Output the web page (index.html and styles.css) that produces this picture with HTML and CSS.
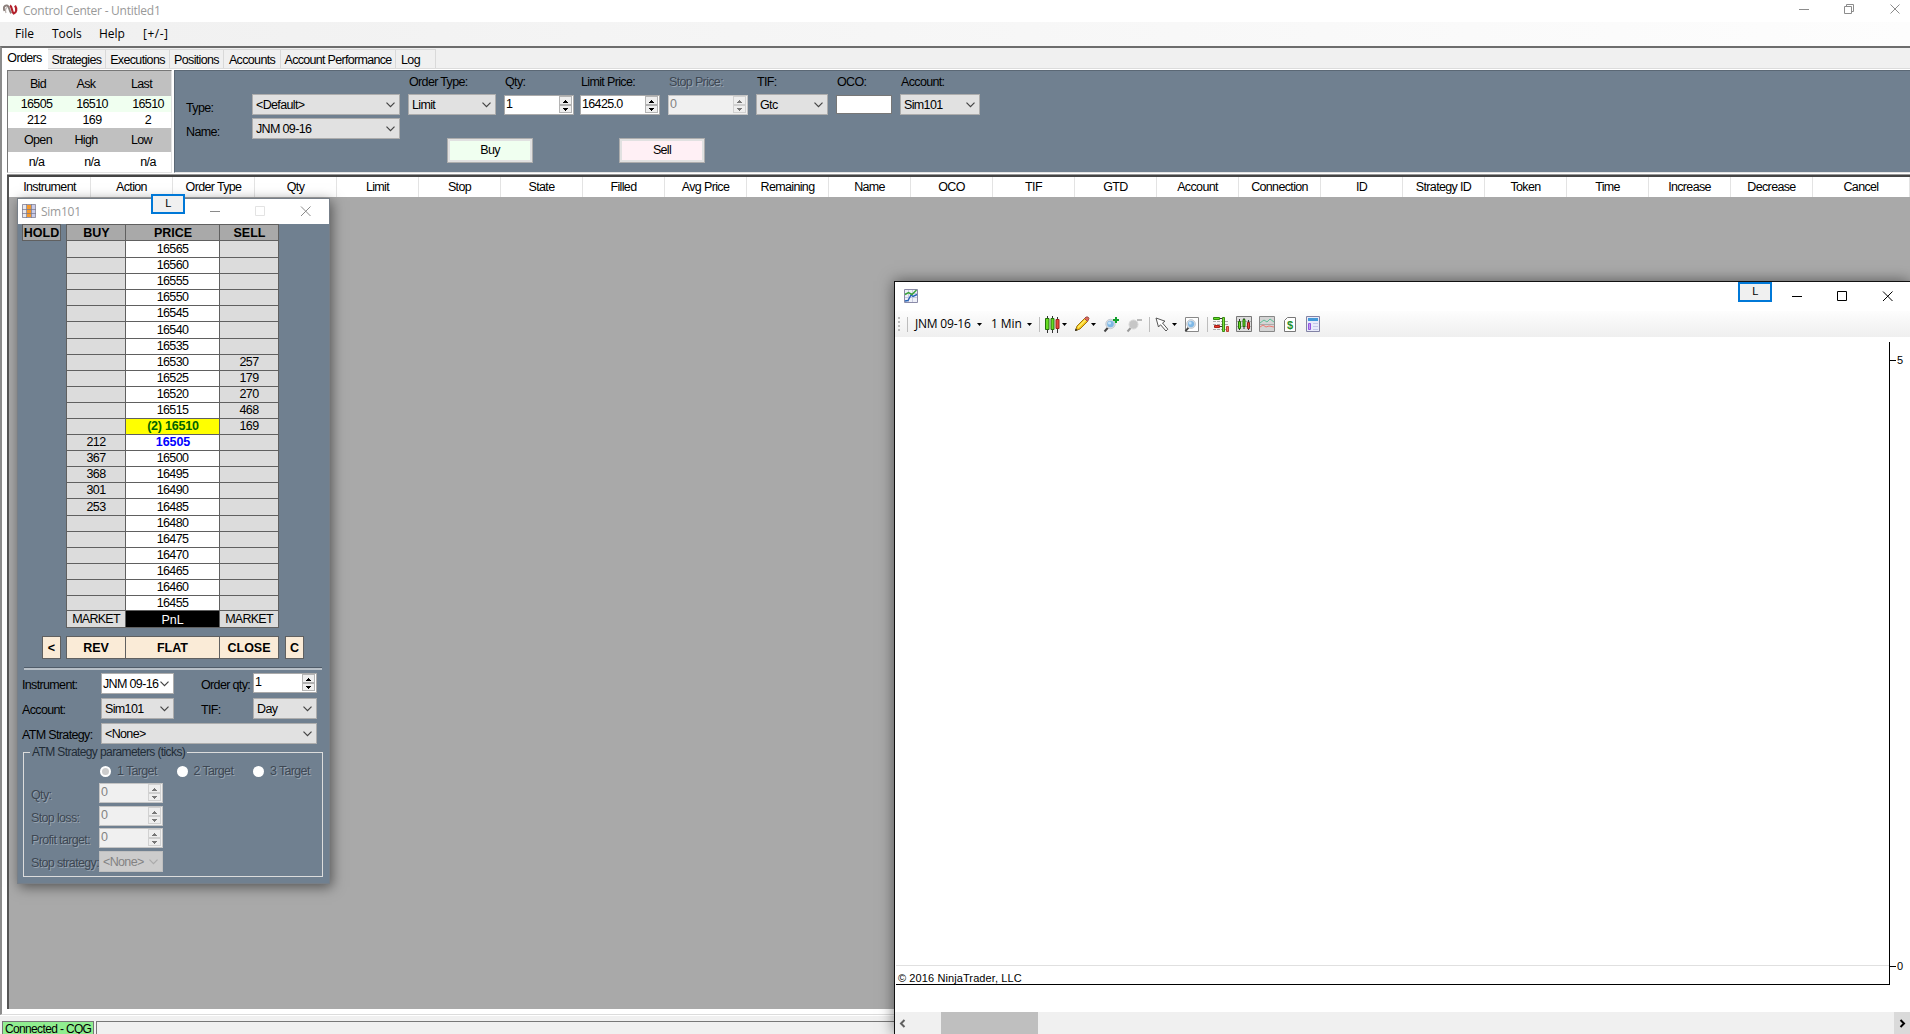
FILE: index.html
```html
<!DOCTYPE html>
<html lang="en">
<head>
<meta charset="utf-8">
<title>Control Center - Untitled1</title>
<link rel="stylesheet" href="styles.css">
</head>
<body>
<svg class="defs" width="0" height="0">
  <symbol id="chev" viewBox="0 0 9 6"><path d="M.5 .7 4.5 4.7 8.500 .7" fill="none" stroke="currentColor" stroke-width="1.2"/></symbol>
  <symbol id="drop" viewBox="0 0 5 3"><path d="M0 0h5L2.500 3z" fill="#000"/></symbol>
  <symbol id="lens" viewBox="0 0 17 17"><path d="M1.500 15.500 6 10.500" stroke="#444" stroke-width="2"/><circle cx="7.500" cy="8" r="4.700" fill="#d5dce2" stroke="#c4cbd2"/><circle cx="7.500" cy="8" r="3.300" fill="#7fb8e6"/><circle cx="6.500" cy="7" r="1.600" fill="#c3e2f8"/></symbol>
</svg>

<main class="control-center">
  <header class="titlebar">
    <svg class="logo" width="15" height="14" viewBox="0 0 15 14"><path d="M1.500 8C0 4.500 1.500 2 4 2.500 6.800 3.200 5.800 8 8.300 10.300" fill="none" stroke="#8b7f7b" stroke-width="1.900"/><path d="M3 10C1.800 7 3 4.200 4.500 4.800" fill="none" stroke="#b9b1ae" stroke-width="1.200"/><path d="M7 2.500C9.500 4 8.500 9 10.800 10.500 13.300 10 14.300 6 12 2.700" fill="none" stroke="#b3202b" stroke-width="2.200"/></svg>
    <span class="caption">Control Center - Untitled1</span>
    <svg class="sysbtns" width="102" height="14" viewBox="0 0 102 14" fill="none" stroke="#8c8c8c"><path d="M1 7.500h10M46.500 4.500h7v7h-7zM48.500 4v-1.500h7v7h-1.500M92.500 2.500l9 9M101.500 2.500l-9 9"/></svg>
  </header>
  <nav class="menu"><span>File</span><span>Tools</span><span>Help</span><span>[+/-]</span></nav>

  <div class="frame">
    <div class="tabs">
      <span class="tab active w-orders">Orders</span><span class="tab w-strat">Strategies</span><span class="tab w-exec">Executions</span><span class="tab w-pos">Positions</span><span class="tab w-acc">Accounts</span><span class="tab w-perf">Account Performance</span><span class="tab w-log">Log</span>
    </div>
    <div class="page">
      <div class="top-panels">
        <section class="quotes">
          <div class="q head tall"><span>Bid</span><span>Ask</span><span>Last</span></div>
          <div class="q mint"><span>16505</span><span>16510</span><span>16510</span></div>
          <div class="q size"><span>212</span><span>169</span><span>2</span></div>
          <div class="q head mid"><span>Open</span><span>High</span><span>Low</span></div>
          <div class="q low"><span>n/a</span><span>n/a</span><span>n/a</span></div>
        </section>
        <section class="entry">
          <div class="presets">
            <span>Type:</span><div class="combo">&lt;Default&gt;<svg><use href="#chev"/></svg></div>
            <span>Name:</span><div class="combo">JNM 09-16<svg><use href="#chev"/></svg></div>
          </div>
          <div class="order">
            <div class="labels"><span>Order Type:</span><span>Qty:</span><span>Limit Price:</span><span class="off">Stop Price:</span><span>TIF:</span><span>OCO:</span><span>Account:</span></div>
            <div class="inputs">
              <div class="combo">Limit<svg><use href="#chev"/></svg></div>
              <div class="spin">1<i></i></div>
              <div class="spin">16425.0<i></i></div>
              <div class="spin dis">0<i></i></div>
              <div class="combo">Gtc<svg><use href="#chev"/></svg></div>
              <div class="box"></div>
              <div class="combo">Sim101<svg><use href="#chev"/></svg></div>
            </div>
            <div class="actions"><span class="btn buy">Buy</span><span class="btn sell">Sell</span></div>
          </div>
        </section>
      </div>
      <section class="orders">
        <div class="cols"><span>Instrument</span><span>Action</span><span>Order Type</span><span>Qty</span><span>Limit</span><span>Stop</span><span>State</span><span>Filled</span><span>Avg Price</span><span>Remaining</span><span>Name</span><span>OCO</span><span>TIF</span><span>GTD</span><span>Account</span><span>Connection</span><span>ID</span><span>Strategy ID</span><span>Token</span><span>Time</span><span>Increase</span><span>Decrease</span><span>Cancel</span></div>
      </section>
    </div>
  </div>
  <footer class="status"><span class="conn">Connected - CQG</span><span class="rest"></span></footer>
</main>

<section class="dom">
  <span class="link dom-link">L</span>
  <header class="dom-title">
    <svg width="14" height="14" viewBox="0 0 14 14"><path fill="#e8e8ee" d="M0 0h14v14H0z"/><path fill="#c9cbe8" d="M9 1h4v12H9z"/><path fill="#f79a2c" d="M5 1h4v12H5z"/><path d="M.5 .5h13v13H.5zM4.500 0v14M9.500 0v14M0 5.500h14M0 9.500h14" stroke="#77768a" fill="none" stroke-opacity=".7"/></svg>
    <span class="caption">Sim101</span>
    <svg class="dom-sys" width="104" height="14" viewBox="0 0 104 14" fill="none"><path d="M0 7.500h10M91 2.500l9.500 9.500M100.500 2.500 91 12" stroke="#8a8a8a"/><path d="M45.500 2.500h9v9h-9z" stroke="#e3e3e3"/></svg>
  </header>
  <div class="ladder">
    <span class="hold">HOLD</span>
    <div class="rows">
      <div class="r h"><span>BUY</span><span>PRICE</span><span>SELL</span></div>
      <div class="r x"><span></span><span>16565</span><span></span></div>
      <div class="r"><span></span><span>16560</span><span></span></div>
      <div class="r"><span></span><span>16555</span><span></span></div>
      <div class="r"><span></span><span>16550</span><span></span></div>
      <div class="r"><span></span><span>16545</span><span></span></div>
      <div class="r x"><span></span><span>16540</span><span></span></div>
      <div class="r"><span></span><span>16535</span><span></span></div>
      <div class="r"><span></span><span>16530</span><span>257</span></div>
      <div class="r"><span></span><span>16525</span><span>179</span></div>
      <div class="r"><span></span><span>16520</span><span>270</span></div>
      <div class="r"><span></span><span>16515</span><span>468</span></div>
      <div class="r last"><span></span><span>(2) 16510</span><span>169</span></div>
      <div class="r bid"><span>212</span><span>16505</span><span></span></div>
      <div class="r"><span>367</span><span>16500</span><span></span></div>
      <div class="r"><span>368</span><span>16495</span><span></span></div>
      <div class="r"><span>301</span><span>16490</span><span></span></div>
      <div class="r x"><span>253</span><span>16485</span><span></span></div>
      <div class="r"><span></span><span>16480</span><span></span></div>
      <div class="r"><span></span><span>16475</span><span></span></div>
      <div class="r"><span></span><span>16470</span><span></span></div>
      <div class="r"><span></span><span>16465</span><span></span></div>
      <div class="r"><span></span><span>16460</span><span></span></div>
      <div class="r short"><span></span><span>16455</span><span></span></div>
      <div class="r pnl"><span>MARKET</span><span>PnL</span><span>MARKET</span></div>
    </div>
  </div>
  <div class="exits"><b class="solo">&lt;</b><div class="trio"><b>REV</b><b>FLAT</b><b>CLOSE</b></div><b class="solo">C</b></div>
  <hr>
  <div class="form">
    <span>Instrument:</span><div class="combo white">JNM 09-16<svg><use href="#chev"/></svg></div><span class="c3">Order qty:</span><div class="spin">1<i></i></div>
    <span>Account:</span><div class="combo">Sim101<svg><use href="#chev"/></svg></div><span class="c3">TIF:</span><div class="combo">Day<svg><use href="#chev"/></svg></div>
    <span class="atm">ATM Strategy:</span><div class="combo wide">&lt;None&gt;<svg><use href="#chev"/></svg></div>
  </div>
  <fieldset>
    <legend>ATM Strategy parameters (ticks)</legend>
    <div class="radios off"><span><i class="on"></i>1 Target</span><span><i></i>2 Target</span><span><i></i>3 Target</span></div>
    <div class="params">
      <span class="off">Qty:</span><div class="spin dis">0<i></i></div>
      <span class="off">Stop loss:</span><div class="spin dis">0<i></i></div>
      <span class="off">Profit target:</span><div class="spin dis">0<i></i></div>
      <span class="off">Stop strategy:</span><div class="combo dis">&lt;None&gt;<svg><use href="#chev"/></svg></div>
    </div>
  </fieldset>
</section>

<section class="chart">
  <span class="link chart-link">L</span>
  <header class="chart-title">
    <svg width="14" height="14" viewBox="0 0 14 14"><path d="M.5 .5h13v13H.5z" fill="#eef0f8" stroke="#8b8ba8"/><path d="M4.500 1v12M8.500 1v12M1 4.500h12M1 8.500h12" stroke="#c9cbe0"/><path d="M1 12 4 11.500 7 6 9 7.500 13 5.500" fill="none" stroke="#2763b5" stroke-width="1.400"/><path d="M1 5.500 4.500 3.500 8 5.500 12.500 1" fill="none" stroke="#3aa33a" stroke-width="1.500"/></svg>
    <svg class="chart-sys" width="102" height="14" viewBox="0 0 102 14" fill="none" stroke="#000"><path d="M0 7.500h10M45.500 2.500h9v9h-9zM91 2.500l9.500 9.500M100.500 2.500 91 12"/></svg>
  </header>
  <div class="toolbar">
    <svg class="grip" width="2" height="15"><path d="M0 0h2v2H0zM0 4h2v2H0zM0 8h2v2H0zM0 12h2v2H0z" fill="#bdbdbd"/></svg><u class="s1"></u>
    <span class="t-sym">JNM 09-16</span><svg class="dd"><use href="#drop"/></svg>
    <span class="t-min">1 Min</span><svg class="dd"><use href="#drop"/></svg><u class="s2"></u>
    <svg class="i-bars" width="15" height="17" viewBox="0 0 15 17"><path d="M2.500 0v17M7.500 0v17M12.500 1v16" stroke="#333"/><path d="M.5 2.500h3.500v11H.5zM6 2.500h3v11H6z" fill="#66dd22" stroke="#25700b"/><path d="M11 3.500h3v9h-3z" fill="#e8483d" stroke="#97201a"/></svg><svg class="dd d-a"><use href="#drop"/></svg>
    <svg class="i-pen" width="16" height="16" viewBox="0 0 16 16"><path d="M1.500 14.500 3 10 10.500 2.500l3 3L6 13z" fill="#f7c61d" stroke="#9a7412"/><path d="M4 11.500 11.500 4" stroke="#fff06a" stroke-width="1.500"/><path d="M10.500 2.500 12 1h2l1 1.500-1.500 3z" fill="#e2695c" stroke="#9d5047"/><path d="m1 15 .7-2.500 2 1.800z" fill="#222"/></svg><svg class="dd d-b"><use href="#drop"/></svg>
    <svg class="i-zin" width="17" height="17" viewBox="0 0 17 17"><use href="#lens"/><path d="M13 1v6M10 4h6" stroke="#12a02c" stroke-width="2"/></svg>
    <svg class="i-zout" width="17" height="17" viewBox="0 0 17 17"><path d="M1.500 15.500 6 10.500" stroke="#999" stroke-width="2"/><circle cx="7.500" cy="8.500" r="4.500" fill="#c6c6c6" stroke="#d8d8d8"/><path d="M11 4h5" stroke="#aaa" stroke-width="1.600"/></svg><u class="s3"></u>
    <svg class="i-cur" width="14" height="15" viewBox="0 0 14 15"><path d="M1 1l2.500 9 2-2.300 5.500 6.300 1.800-1.800L7.500 6 10 4.200z" fill="#fff" stroke="#555"/></svg><svg class="dd d-c"><use href="#drop"/></svg>
    <svg class="i-box" width="15" height="17" viewBox="0 0 15 17"><path d="M1.500 1.500h13v14h-13z" fill="#fff" stroke="#888"/><use href="#lens" width="16" height="17"/></svg><u class="s4"></u>
    <svg class="i-dom" width="16" height="16" viewBox="0 0 16 16"><path d="M0 5.500h16M0 8.500h16M0 13.500h16" stroke="#aaa" stroke-dasharray="3 1"/><path d="M.5 1.500h6v2H.5z" fill="#66dd22" stroke="#2f8a10"/><path d="M1.500 9.500h5v2h-5z" fill="#e8392e" stroke="#a82018"/><path d="M7 2.500h2M7 10.500h2" stroke="#333"/><path d="M9.500 1.500h2v14h-2z" fill="#7be03a" stroke="#3b8b14"/><path d="M13.500 10.500h2v5h-2z" fill="#f26d5f" stroke="#b93e33"/></svg>
    <svg class="i-cb" width="16" height="16" viewBox="0 0 16 16"><path d="M.5 .5h15v15H.5z" fill="#ddd" stroke="#777"/><path d="M1 5.500h14M1 10.500h14" stroke="#aaa"/><path d="M3.500 3v11M8 2v11M12.500 4v10" stroke="#333"/><path d="M2.500 5.500h2v7h-2zM7 3.500h2v7H7z" fill="#66dd22" stroke="#25700b"/><path d="M11.500 6.500h2v6h-2z" fill="#e8483d" stroke="#97201a"/></svg>
    <svg class="i-ind" width="16" height="16" viewBox="0 0 16 16"><path d="M.5 .5h15v15H.5z" fill="#d4d4d4" stroke="#888"/><path d="M1 8.500h14" stroke="#aaa"/><path d="M1 7 5 4l3 2 3-3 4 3" fill="none" stroke="#5fbf97"/><path d="M1 11l3-2 3 2 3-1 5 1" fill="none" stroke="#ee7a72"/></svg>
    <svg class="i-usd" width="12" height="15" viewBox="0 0 12 15"><path d="M.5 3.500 3.500 .5h8v14H.5z" fill="#fff" stroke="#777"/><text x="6" y="12" text-anchor="middle" class="usd">$</text></svg>
    <svg class="i-prop" width="14" height="16" viewBox="0 0 14 16"><path d="M.5 .5h13v15H.5z" fill="#e9ebfa" stroke="#8283a5"/><path d="M2 2h10v3H2z" fill="#4399d8"/><path d="M2.500 7.500h2v6h-2z" fill="#c39bf2" stroke="#9155e0"/><path d="M7 7.500h5M7 10.500h5M7 13.500h5" stroke="#c4c8ea"/></svg>
  </div>
  <div class="plot">
    <div class="area"><span class="copy">© 2016 NinjaTrader, LLC</span></div>
    <div class="axis"><span>5</span><span>0</span></div>
  </div>
  <div class="scroll"><svg width="7" height="9" viewBox="0 0 7 9"><path d="M5.500 1 2 4.500 5.500 8" fill="none" stroke="#606060" stroke-width="2"/></svg><div class="thumb"></div><div class="right"><svg width="7" height="9" viewBox="0 0 7 9"><path d="M1.500 1 5 4.500 1.500 8" fill="none" stroke="#000" stroke-width="2"/></svg></div></div>
</section>
</body>
</html>
```
FILE: styles.css
```css
* { box-sizing: border-box; }
body { margin: 0; width: 1910px; height: 1034px; overflow: hidden; position: relative; background: #f0f0f0; color: #000; font: 12.5px/16px "Liberation Sans", sans-serif; letter-spacing: -.65px; white-space: nowrap; }
.defs { position: absolute; }
svg { display: block; flex: none; }
span { flex: none; }

/* main window */
.control-center { height: 1034px; display: flex; flex-direction: column; overflow: hidden; }
.titlebar { flex: none; height: 22px; background: #fff; display: flex; align-items: flex-start; padding: 3px 10px 0 3px; }
.caption { font: 12px/16px "Open Sans", sans-serif; color: #999; margin-left: 5px; letter-spacing: -.25px; }
.sysbtns { margin-left: auto; margin-top: -1px; }
.menu { flex: none; height: 24px; background: linear-gradient(90deg, #f0f0f0, #fdfdfd); padding: 4px 0 0 15px; display: flex; font: 12px/16px "Open Sans", sans-serif; letter-spacing: 0; }
.menu span:nth-child(1) { width: 37px; }
.menu span:nth-child(2) { width: 47px; }
.menu span:nth-child(3) { width: 44px; }
.menu span:nth-child(4) { letter-spacing: .5px; }
.frame { flex: none; height: 969px; border-top: 2px solid #6d6d6d; border-left: 2px solid #8c8c8c; border-bottom: 1px solid #dcdcdc; display: flex; flex-direction: column; background: #f0f0f0; }
.tabs { height: 21px; display: flex; align-items: flex-end; border-bottom: 1px solid #dcdcdc; }
.tab { height: 19px; border: 1px solid #d9d9d9; border-left: 0; border-bottom: 0; text-align: center; line-height: 21px; }
.tab.active { height: 21px; background: #fff; border-color: #fff; line-height: 19px; margin-bottom: -1px; }
.w-orders { width: 46px; } .w-strat { width: 58px; } .w-exec { width: 64px; } .w-pos { width: 54px; } .w-acc { width: 57px; } .w-perf { width: 115px; letter-spacing: -.7px; } .w-log { width: 40px; padding-right: 10px; }
.page { flex: 1; background: #fff; padding: 1px 0 5px 5px; display: flex; flex-direction: column; }
.top-panels { height: 103px; display: flex; gap: 2px; }
.quotes { width: 165px; border: 1px solid #777; border-right-color: #e3e3e3; border-bottom-color: #e3e3e3; }
.q { height: 16px; display: grid; grid-template-columns: 57px 57px 50px; text-align: center; line-height: 17px; background: #fff; }
.q.mint { background: #f0fff0; }
.q.head { background: #c0c0c0; }
.q.tall { height: 25px; line-height: 26px; }
.q.mid { height: 24px; line-height: 24px; }
.q.low { height: 20px; line-height: 20px; }
.q span:nth-child(2) { padding-right: 3px; }
.q span:nth-child(3) { padding-left: 2px; }
.q.head span:nth-child(1) { padding-left: 3px; }
.q.head span:nth-child(2) { padding-right: 15px; }
.q.head span:nth-child(3) { padding: 0 11px 0 0; }
.entry { flex: 1; border: 1px solid #5b6875; border-right: 0; border-bottom-color: #e3e3e3; background: #708090; display: flex; }
.presets { width: 225px; padding: 23px 0 0 11px; display: grid; grid-template-columns: 66px 148px; grid-auto-rows: 21px; row-gap: 3px; align-content: start; }
.presets span { padding-top: 6px; }
.combo { height: 21px; background: #e1e1e1; border: 1px solid #adadad; padding: 1px 4px 0 3px; display: flex; align-items: center; justify-content: space-between; color: #000; }
.combo svg { width: 9px; height: 6px; color: #444; }
.combo.dis { background: #ccc; border-color: #bfbfbf; color: #838383; }
.combo.dis svg { color: #aaa; }
.combo.white { background: #fff; padding: 0 4px 0 1px; }
.spin { height: 20px; background: #fff; border: 1px solid #aaa; padding-left: 1px; display: flex; justify-content: space-between; line-height: 17px; color: #000; }
.spin i { width: 13px; height: 17px; margin: 0 1px 0 0; border: 1px solid #b4b4b4; background:
  linear-gradient(#b0b0b0, #b0b0b0) 0 7px / 100% 2px no-repeat,
  linear-gradient(#000, #000) 3px 11px / 5px 1px no-repeat,
  linear-gradient(#000, #000) 4px 12px / 3px 1px no-repeat,
  linear-gradient(#000, #000) 5px 13px / 1px 1px no-repeat,
  linear-gradient(#000, #000) 5px 3px / 1px 1px no-repeat,
  linear-gradient(#000, #000) 4px 4px / 3px 1px no-repeat,
  linear-gradient(#000, #000) 3px 5px / 5px 1px no-repeat, #eee; }
.spin.dis { background: #f0f0f0; color: #838383; border-color: #c4c4c4; }
.spin.dis i { opacity: .5; }
.off { color: #3d4753; text-shadow: 1px 1px 0 #98a4b0; }
.order { padding-top: 3px; }
.labels, .inputs { display: grid; grid-template-columns: 96px 76px 88px 88px 80px 64px 88px; }
.labels { padding-left: 9px; }
.inputs { padding: 4px 0 0 8px; }
.inputs > * { margin-right: 8px; }
.inputs .spin { margin-top: 1px; }
.inputs > :nth-child(2) { margin-right: 6px; }
.box { height: 19px; background: #fff; border: 1px solid #777; margin-top: 1px; }
.actions { display: flex; gap: 86px; padding: 23px 0 0 47px; }
.btn { width: 86px; height: 25px; border: 1px solid #adadad; box-shadow: inset 0 0 0 2px #e1e1e1; text-align: center; line-height: 23px; }
.buy { background: #f0fff0; } .sell { background: #fff0f5; }
.orders { flex: 1; margin-top: 2px; border-top: 2px solid #444; border-left: 2px solid #555; background: #a9a9a9; box-shadow: 0 -1px 0 #999; }
.cols { height: 20px; display: grid; grid-template-columns: 82px repeat(21, 82px) 1fr; background: #fff; text-align: center; line-height: 20px; }
.cols span { border-right: 1px solid #e3e3e3; }
.status { flex: 1; border-top: 1px solid #fff; padding: 5px 0 0 2px; display: flex; gap: 2px; }
.conn { width: 92px; border: 1px solid #777; background: #90ee90; padding-left: 2px; font-size: 12px; line-height: 15px; }
.rest { flex: 1; border-top: 1px solid #777; border-left: 1px solid #777; }

/* small link button lying across a title bar */
.link { position: absolute; z-index: 2; width: 34px; height: 20px; border: 2px solid #0078d7; background: #f0f0f0; text-align: center; line-height: 15px; font-size: 11px; }
.dom-link { left: 133px; top: -5px; }
.chart-link { left: 843px; top: 0; }

/* ladder window */
.dom { position: absolute; left: 17px; top: 198px; width: 313px; height: 686px; border: 1px solid #777f88; background: #708090; box-shadow: 2px 3px 12px rgba(0,0,0,.5); }
.dom-title { height: 25px; background: #fff; display: flex; padding: 5px 15px 0 4px; }
.dom-title .caption { line-height: 15px; margin-left: 5px; }
.dom-sys { margin-left: auto; }
.ladder { display: flex; padding-left: 4px; gap: 5px; align-items: flex-start; }
.hold, .r.h span, .r.last span:nth-child(2), .r.bid span:nth-child(2), .exits b { font-weight: bold; letter-spacing: 0; }
.hold { width: 39px; height: 17px; background: #a9a9a9; border: 1px solid #606060; line-height: 16px; text-align: center; }
.rows { width: 213px; border: 1px solid #606060; border-bottom: 0; }
.r { height: 16px; display: grid; grid-template-columns: 58px 95px 58px; text-align: center; line-height: 15px; border-bottom: 1px solid #606060; }
.r.x { height: 17px; line-height: 17px; } .r.short { height: 15px; } .r.pnl { height: 17px; line-height: 17px; }
.r span { background: #dcdcdc; height: 100%; overflow: hidden; }
.r span:nth-child(2) { background: #fff; border: solid #606060; border-width: 0 1px; }
.r.h span, .r.h span:nth-child(2) { background: #a9a9a9; line-height: 17px; padding-left: 1px; }
.r.last span:nth-child(2) { background: #ff0; color: #006400; letter-spacing: -.2px; padding-left: 1px; }
.r.bid span:nth-child(2) { color: #00f; letter-spacing: -.1px; padding-left: 1px; }
.r.pnl span { letter-spacing: -.75px; }
.r.pnl span:nth-child(2) { background: #000; color: #fff; line-height: 18px; letter-spacing: 0; }
.exits { display: flex; padding: 8px 0 0 24px; gap: 5px; }
.exits b { height: 23px; background: #faebd7; border: 1px solid #606060; text-align: center; line-height: 22px; }
.solo { width: 19px; }
.trio { display: grid; grid-template-columns: 60px 94px 59px; width: 213px; margin-right: 1px; }
.trio b + b { margin-left: -1px; }
hr { margin: 8px 7px 0 6px; border: 0; border-top: 1px solid #505c69; height: 3px; background: #b8c0c8; }
.form { display: grid; grid-template-columns: 79px 73px 79px 64px; grid-auto-rows: 21px; row-gap: 4px; padding: 3px 0 0 4px; }
.form span { padding-top: 4px; }
.form .c3 { padding-left: 27px; }
.form .wide { grid-column: 2 / 5; }
fieldset { min-width: 0; margin: 0 6px 0 5px; border: 1px solid #dcdcdc; padding: 0; height: 133px; }
legend { margin-left: 6px; padding: 0 2px; color: #222c36; line-height: 16px; font-size: 12px; letter-spacing: -.6px; }
.radios { display: flex; padding: 3px 0 0 76px; }
.radios span { width: 76.5px; display: flex; align-items: center; gap: 6px; }
.radios i { width: 11px; height: 11px; border-radius: 50%; background: #fff; }
.radios i.on { border: 2px solid #fff; background: #ccc; }
.params { display: grid; grid-template-columns: 68px 64px; grid-template-rows: 23px 22px 23px 21px; padding: 4px 0 0 7px; }
.params span { padding-top: 4px; }

/* chart window */
.chart { position: absolute; left: 894px; top: 281px; width: 1016px; height: 753px; border: 1px solid #111; border-right: 0; border-bottom: 0; background: #fff; box-shadow: 0 0 14px rgba(0,0,0,.5); display: flex; flex-direction: column; }
.chart-title { height: 29px; display: flex; padding: 7px 16px 0 9px; }
.chart-sys { margin-left: auto; }
.toolbar { height: 26px; background: linear-gradient(#fdfdfd, #efefef); display: flex; align-items: center; padding-left: 3px; font: 12px/16px "Open Sans", sans-serif; letter-spacing: 0; }
.toolbar u { width: 1px; height: 15px; background: #bdbdbd; }
.dd { width: 5px; height: 3px; }
.s1 { margin: 0 7px; } .t-sym { width: 62px; letter-spacing: -.2px; } .t-min { width: 36px; margin-left: 9px; letter-spacing: -.1px; } .s2 { margin: 0 5px 0 7px; }
.d-a { margin: 0 7px 0 2px; } .d-b { margin: 0 7px 0 1px; } .i-zout { margin: 0 6px; } .i-cur { margin-left: 5px; }
.d-c { margin: 0 7px 0 3px; } .s4 { margin: 0 5px 0 8px; } .i-cb { margin: 0 7px; } .i-usd { margin: 0 10px 0 9px; }
.usd { font: bold 11px "Liberation Sans", sans-serif; fill: #1f8f2a; }
.plot { flex: 1; display: flex; padding: 5px 0 0 1px; }
.area { width: 994px; height: 643px; border: solid #000; border-width: 0 1px 1px 0; display: flex; flex-direction: column; justify-content: flex-end; }
.copy { height: 19px; border-top: 1px solid #e0e0e0; padding: 5px 0 0 2px; font: 11px/14px "Liberation Sans", sans-serif; letter-spacing: .1px; }
.axis { width: 20px; height: 643px; padding: 11px 0 12px; display: flex; flex-direction: column; justify-content: space-between; font: 11px/14px "Liberation Sans", sans-serif; letter-spacing: 0; }
.axis span { display: flex; align-items: center; gap: 1px; }
.axis span::before { content: ""; width: 6px; height: 1px; background: #000; }
.scroll { height: 22px; background: #f0f0f0; display: flex; align-items: center; padding-left: 4px; }
.thumb { width: 97px; height: 22px; background: #bfbfbf; margin-left: 35px; }
.right { width: 16px; height: 22px; background: #dadada; margin-left: auto; display: flex; align-items: center; justify-content: center; }
```
